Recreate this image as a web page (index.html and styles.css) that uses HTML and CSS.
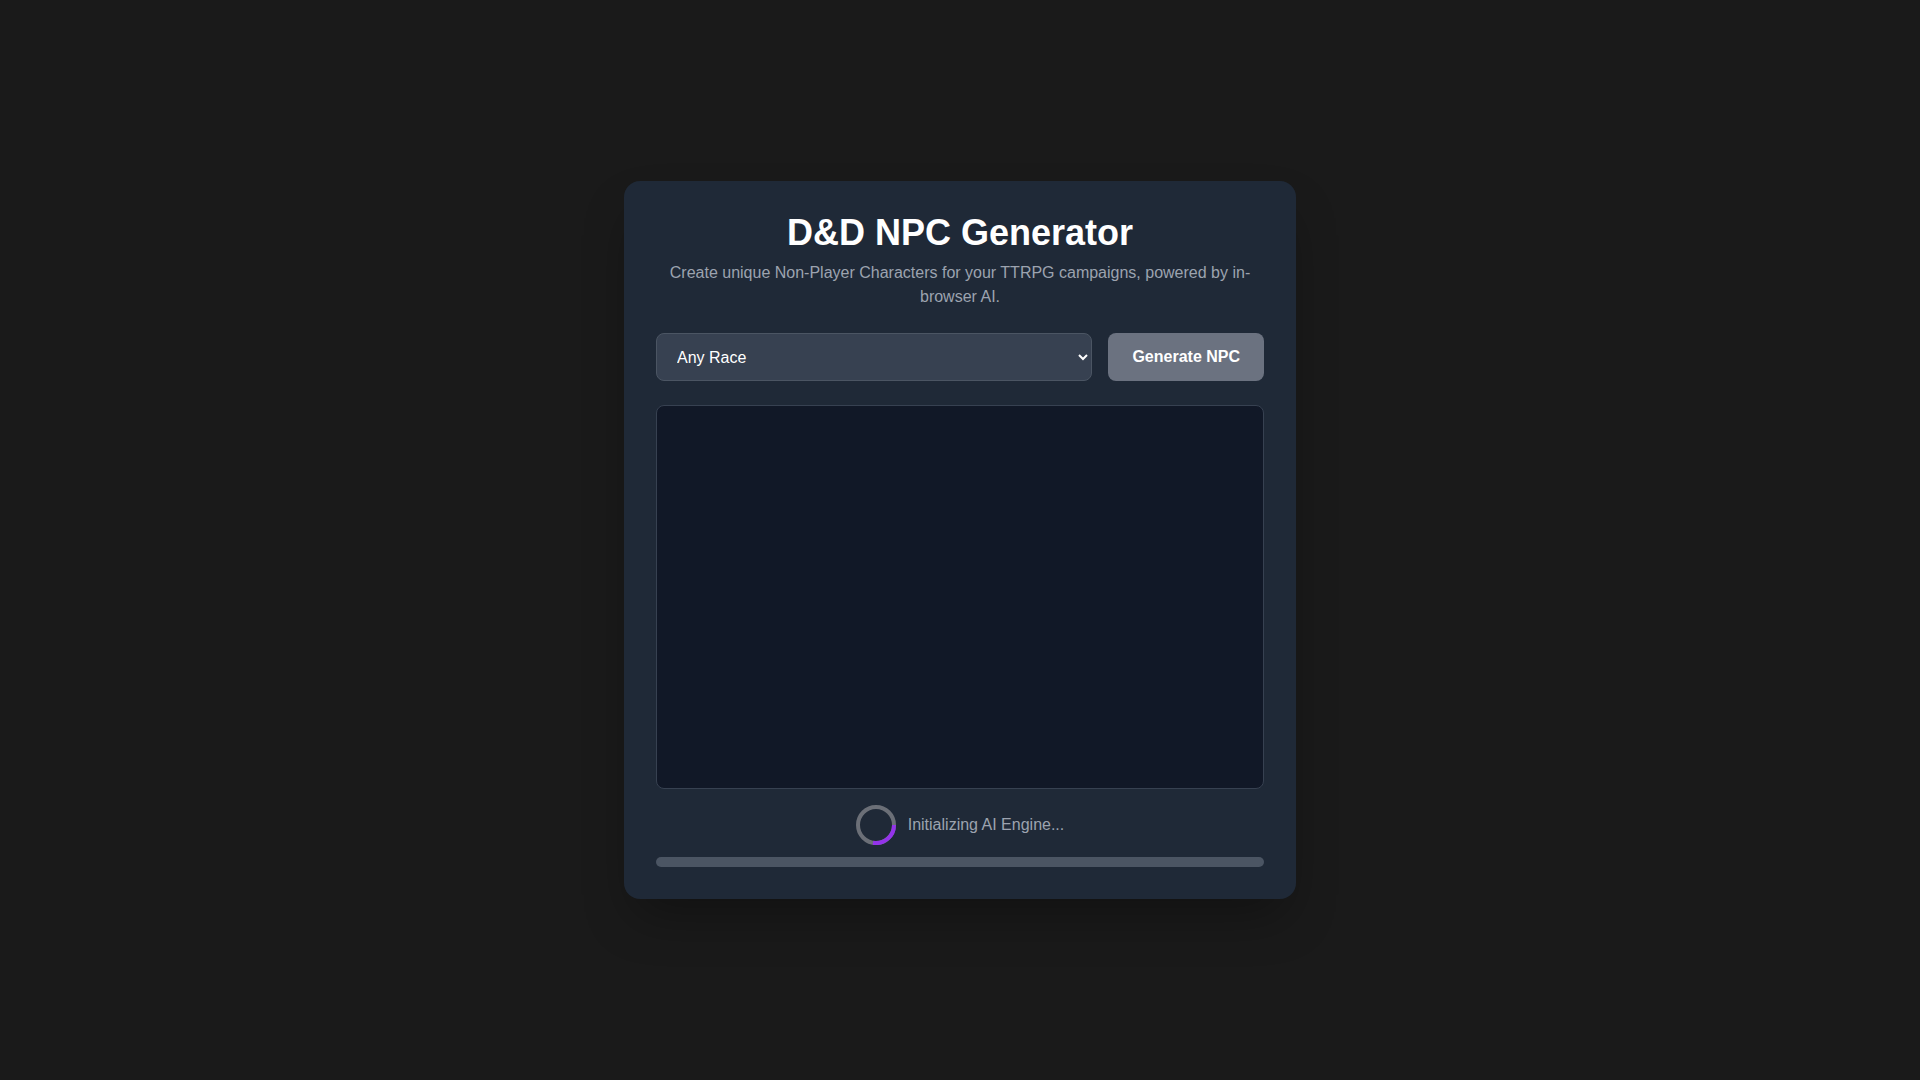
FILE: index.html
```html
<!DOCTYPE html>
<html lang="en">
<head>
<meta charset="utf-8">
<title>D&amp;D NPC Generator</title>
<link rel="stylesheet" href="styles.css">
</head>
<body>
<main class="page">
  <section class="card">
    <h1 class="title">D&amp;D NPC Generator</h1>
    <p class="subtitle">Create unique Non-Player Characters for your TTRPG campaigns, powered by in-browser AI.</p>
    <div class="controls">
      <select class="race-select">
        <option>Any Race</option>
        <option>Human</option>
        <option>Elf</option>
        <option>Dwarf</option>
      </select>
      <button class="generate-btn" disabled>Generate NPC</button>
    </div>
    <div class="output"></div>
    <div class="status">
      <svg class="spinner" width="40" height="40" viewBox="0 0 40 40">
        <circle cx="20" cy="20" r="18" fill="none" stroke="#6b6f77" stroke-width="4"/>
        <path d="M38 20 A18 18 0 0 1 17 37.8" fill="none" stroke="#9333ea" stroke-width="4"/>
      </svg>
      <span class="status-text">Initializing AI Engine...</span>
    </div>
    <div class="progress"></div>
  </section>
</main>
</body>
</html>
```

FILE: styles.css
```css
html, body {
  margin: 0;
  padding: 0;
}
body {
  background: #1a1a1a;
  font-family: "Liberation Sans", Arial, sans-serif;
  color: #ffffff;
}
.page {
  min-height: 100vh;
  display: flex;
  align-items: center;
  justify-content: center;
}
.card {
  width: 672px;
  box-sizing: border-box;
  padding: 32px;
  background: #1f2937;
  border-radius: 16px;
  box-shadow: 0 25px 50px -12px rgba(0, 0, 0, 0.35);
  display: flex;
  flex-direction: column;
}
.title {
  margin: 0 0 8px;
  font-size: 36px;
  line-height: 40px;
  font-weight: 700;
  text-align: center;
  color: #ffffff;
}
.subtitle {
  margin: 0 0 24px;
  font-size: 16px;
  line-height: 24px;
  text-align: center;
  color: #9ca3af;
}
.controls {
  display: flex;
  gap: 16px;
  margin-bottom: 24px;
}
.race-select {
  flex: 1;
  height: 48px;
  box-sizing: border-box;
  padding: 0 12px 0 16px;
  background: #374151;
  border: 1px solid #4b5563;
  border-radius: 8px;
  color: #ffffff;
  font-family: "Liberation Sans", Arial, sans-serif;
  font-size: 16px;
  color-scheme: dark;
}
.generate-btn {
  height: 48px;
  padding: 0 24px;
  background: #6b7280;
  border: none;
  border-radius: 8px;
  color: #ffffff;
  font-family: "Liberation Sans", Arial, sans-serif;
  font-size: 16px;
  font-weight: 700;
}
.output {
  height: 384px;
  box-sizing: border-box;
  background: #111827;
  border: 1px solid #374151;
  border-radius: 8px;
}
.status {
  margin-top: 16px;
  display: flex;
  align-items: center;
  justify-content: center;
  gap: 12px;
  height: 40px;
}
.spinner {
  display: block;
  flex: none;
}
.status-text {
  font-size: 16px;
  color: #9ca3af;
}
.progress {
  margin-top: 12px;
  height: 10px;
  background: #4b5563;
  border-radius: 9999px;
}
```
